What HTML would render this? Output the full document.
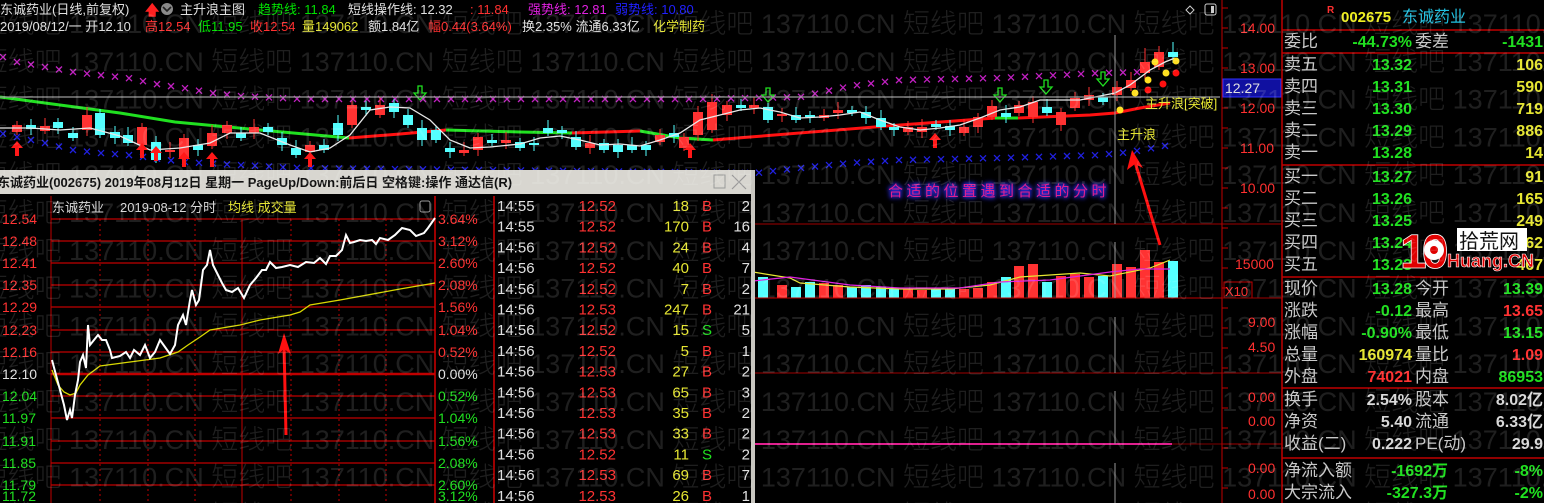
<!DOCTYPE html>
<html><head><meta charset="utf-8"><style>
html,body{margin:0;padding:0;background:#000;width:1544px;height:503px;overflow:hidden}
svg{display:block}
text{font-family:"Liberation Sans","Noto Sans CJK SC",sans-serif}
</style></head><body>
<svg id="s" width="1544" height="503" viewBox="0 0 1544 503" xmlns="http://www.w3.org/2000/svg">
<rect width="1544" height="503" fill="#000"/>
<g id="main"></g>
<line x1="0" y1="97" x2="1220" y2="97" stroke="#9a9a9a" stroke-width="1.2"/>
<line x1="752" y1="224" x2="1222" y2="224" stroke="#a00000"/>
<line x1="752" y1="298" x2="1222" y2="298" stroke="#c00000"/>
<line x1="752" y1="373" x2="1222" y2="373" stroke="#a00000"/>
<line x1="752" y1="444" x2="1172" y2="444" stroke="#e0208f" stroke-width="2"/>
<line x1="1172" y1="444" x2="1222" y2="444" stroke="#800000"/>
<line x1="1115" y1="35" x2="1115" y2="224" stroke="#999"/>
<line x1="1115" y1="242" x2="1115" y2="298" stroke="#999"/>
<line x1="1115" y1="317" x2="1115" y2="373" stroke="#999"/>
<line x1="1115" y1="391" x2="1115" y2="444" stroke="#999"/>
<line x1="1115" y1="463" x2="1115" y2="503" stroke="#999"/>
<g font-size="13">
<text x="0" y="14" fill="#e0e0e0">东诚药业(日线,前复权)</text>
<text x="145" y="15" fill="#ff2020" font-size="14" font-weight="bold">🡅</text>
<circle cx="167" cy="9" r="6" fill="#8a8a8a"/><path d="M163,7 L167,11 L171,7" stroke="#222" stroke-width="1.6" fill="none"/>
<text x="180" y="14" fill="#e0e0e0">主升浪主图</text>
<text x="258" y="14" fill="#00e000">趋势线: 11.84</text>
<text x="348" y="14" fill="#e0e0e0">短线操作线: 12.32</text>
<text x="470" y="14" fill="#ff3030">: 11.84</text>
<text x="528" y="14" fill="#e020e0">强势线: 12.81</text>
<text x="615" y="14" fill="#2020ff">弱势线: 10.80</text>
<text x="0" y="31" fill="#e0e0e0">2019/08/12/一 开12.10</text>
<text x="145" y="31" fill="#ff3030">高12.54</text>
<text x="198" y="31" fill="#00e000">低11.95</text>
<text x="250" y="31" fill="#ff3030">收12.54</text>
<text x="302" y="31" fill="#e6e632">量149062</text>
<text x="368" y="31" fill="#e0e0e0">额1.84亿</text>
<text x="428" y="31" fill="#ff3030">幅0.44(3.64%)</text>
<text x="522" y="31" fill="#e0e0e0">换2.35% 流通6.33亿</text>
<text x="653" y="31" fill="#e6e632">化学制药</text>
</g>
<path d="M1190,6 l4,4 l-4,4 l-4,-4z" stroke="#ccc" fill="none"/>
<rect x="1205" y="4" width="11" height="11" rx="2" stroke="#ccc" fill="none"/><rect x="1211" y="6" width="3" height="7" fill="#ccc"/>
<text x="1145" y="108" fill="#e6e632" font-size="13">主升浪[突破]</text>
<text x="1117" y="139" fill="#e6e632" font-size="13">主升浪</text>
<text x="888" y="196" fill="#e0208f" font-size="15" letter-spacing="3.5" style="filter:drop-shadow(0 0 2px #3030ff) drop-shadow(0 0 2px #3030ff)">合适的位置遇到合适的分时</text>
<path d="M1160,245 L1135,162" stroke="#ff1010" stroke-width="3"/>
<path d="M1132,150 L1127,170 L1135,164 L1143,168Z" fill="#ff1010"/>
<line x1="1222" y1="0" x2="1222" y2="503" stroke="#c00000"/>
<g id="ticks"></g>
<g font-size="14" fill="#ff3030">
<text x="1240" y="33">14.00</text><text x="1240" y="73">13.00</text><text x="1240" y="113">12.00</text><text x="1240" y="153">11.00</text><text x="1240" y="193">10.00</text>
<text x="1235" y="269">15000</text><text x="1248" y="327">9.00</text><text x="1248" y="352">4.50</text>
<text x="1248" y="402">0.00</text><text x="1248" y="426">0.00</text><text x="1248" y="473">0.00</text><text x="1248" y="499">0.00</text>
</g>
<rect x="1223" y="79" width="58" height="18" fill="#1010a0" stroke="#3030ff"/>
<text x="1225" y="93" fill="#e0e0e0" font-size="14">12.27</text>
<rect x="1224" y="282" width="28" height="16" fill="none" stroke="#c00000"/>
<text x="1225" y="296" fill="#ff3030" font-size="13">X10</text>
<line x1="1222" y1="224" x2="1282" y2="224" stroke="#a00000"/>
<line x1="1222" y1="298" x2="1282" y2="298" stroke="#a00000"/>
<line x1="1222" y1="373" x2="1282" y2="373" stroke="#a00000"/>
<line x1="1222" y1="444" x2="1282" y2="444" stroke="#a00000"/>
<line x1="1282" y1="0" x2="1282" y2="503" stroke="#c00000" stroke-width="1.5"/>
<g stroke="#c00000" stroke-width="1.5"><line x1="1282" y1="30" x2="1544" y2="30"/><line x1="1282" y1="53" x2="1544" y2="53"/><line x1="1282" y1="165" x2="1544" y2="165"/><line x1="1282" y1="277" x2="1544" y2="277"/><line x1="1282" y1="388" x2="1544" y2="388"/><line x1="1282" y1="458" x2="1544" y2="458"/></g>
<text x="1327" y="13" fill="#ff3030" font-size="10" font-weight="bold">R</text>
<text x="1341" y="22" fill="#f0f020" font-size="15" font-weight="bold">002675</text>
<text x="1402" y="22" fill="#20c0e0" font-size="16">东诚药业</text>
<g id="rp" font-size="16"></g>
<rect x="1457" y="228" width="70" height="23" fill="#fff"/>
<text x="1459" y="248" fill="#111" font-size="20">拾荒网</text>
<text x="1400" y="268" fill="#e00000" font-size="48" font-weight="bold" letter-spacing="-5" stroke="#fff" stroke-width="0.8">10</text>
<circle cx="1434" cy="250" r="10" fill="#fff"/><circle cx="1434" cy="250" r="4" fill="#e00000"/>
<text x="1447" y="267" fill="#e00000" font-size="18" stroke="#fff" stroke-width="0.6" font-weight="bold">Huang.CN</text>
<rect x="0" y="170" width="753" height="333" fill="#000"/>
<rect x="0" y="170" width="753" height="24" fill="#d8d6d0"/>
<rect x="751" y="170" width="4" height="333" fill="#c8c6c0"/>
<text x="-3" y="187" fill="#111" font-size="13" font-weight="bold">东诚药业(002675) 2019年08月12日 星期一 PageUp/Down:前后日 空格键:操作 通达信(R)</text>
<rect x="714" y="175" width="11" height="13" fill="none" stroke="#999"/>
<path d="M732,175 L746,189 M746,175 L732,189" stroke="#999" stroke-width="1.2"/>
<g id="pop"></g>
<g id="wm" fill="#fff" fill-opacity="0.12" font-size="27" style="font-family:'Noto Sans CJK SC','Liberation Sans',sans-serif;font-weight:300"></g>
</svg>
<script>
var NS="http://www.w3.org/2000/svg";
function el(p,t,a,txt){var e=document.createElementNS(NS,t);for(var k in a)e.setAttribute(k,a[k]);if(txt!=null)e.textContent=txt;p.appendChild(e);return e;}
var M=document.getElementById('main');
function pl(pts,col,w){el(M,'polyline',{points:pts.map(function(p){return p.join(',')}).join(' '),fill:'none',stroke:col,'stroke-width':w});}
function interp(pts,x){for(var i=0;i<pts.length-1;i++){if(x>=pts[i][0]&&x<=pts[i+1][0]){var t=(x-pts[i][0])/(pts[i+1][0]-pts[i][0]);return pts[i][1]+t*(pts[i+1][1]-pts[i][1]);}}return pts[pts.length-1][1];}
var mag=[[0,56],[17,62],[45,67],[73,72],[100,75],[128,78],[156,84],[184,88],[212,93],[240,96],[300,99],[700,99],[800,97],[850,86],[900,80],[1000,78],[1100,73],[1145,72]];
var blu=[[0,133],[17,137],[45,143],[73,150],[100,153],[128,155],[184,162],[240,165],[300,168],[756,173],[800,168],[850,163],[900,160],[1000,158],[1100,155],[1130,152],[1170,145]];
function cross(x,y,c){el(M,'path',{d:'M'+(x-3)+','+(y-3)+'l6,6m0,-6l-6,6',stroke:c,'stroke-width':1.3});}
for(var x=3;x<=1150;x+=14){cross(x,interp(mag,x),'#c020c0');}
for(var x=3;x<=1175;x+=14){cross(x,interp(blu,x),'#2020e0');}
pl([[0,97],[60,105],[120,113],[175,122],[260,130],[349,138]],'#20e020',3);
pl([[349,138],[400,134],[446,130]],'#ff1010',3);
pl([[446,130],[520,132],[572,133]],'#20e020',3);
pl([[572,133],[640,131]],'#ff1010',3);
pl([[640,131],[680,138],[713,140]],'#20e020',3);
pl([[713,140],[750,137],[900,125],[995,118]],'#ff1010',3);
pl([[995,118],[1018,118]],'#20e020',3);
pl([[1018,118],[1090,115],[1115,113],[1140,108],[1170,103]],'#ff1010',3);
var C=[[17,125,132,'r'],[31,125,129,'c'],[45,126,131,'r'],[58,122,128,'c'],[73,133,138,'c'],[87,115,130,'r'],[100,113,135,'c'],[115,132,138,'c'],[128,135,143,'c'],[142,127,145,'r'],[156,142,160,'c'],[170,150,152,'r'],[184,138,158,'r'],[198,145,150,'c'],[212,133,146,'r'],[227,125,133,'r'],[241,133,138,'c'],[254,127,133,'r'],[268,127,132,'c'],[282,138,145,'c'],[296,148,155,'c'],[310,145,152,'r'],[324,145,150,'c'],[338,123,135,'c'],[352,105,125,'r'],[366,107,110,'c'],[380,105,115,'r'],[394,103,112,'c'],[408,115,125,'c'],[422,128,140,'c'],[436,130,140,'c'],[450,148,152,'c'],[464,150,153,'r'],[478,137,150,'r'],[492,140,143,'c'],[506,140,143,'r'],[520,142,148,'c'],[534,143,145,'c'],[548,128,133,'c'],[562,130,133,'c'],[576,137,147,'c'],[590,143,148,'r'],[604,143,150,'c'],[618,145,152,'c'],[632,145,150,'c'],[646,145,150,'c'],[660,135,142,'r'],[674,133,137,'c'],[684,137,148,'r'],[698,112,135,'r'],[712,102,130,'r'],[727,105,115,'r'],[741,105,108,'c'],[754,105,108,'r'],
[768,107,120,'c'],[782,114,116,'r'],[796,115,120,'c'],[810,115,117,'c'],[824,115,118,'r'],[838,110,113,'r'],[852,110,113,'c'],[866,112,118,'c'],[881,118,127,'c'],[894,127,130,'c'],[908,127,132,'r'],[922,127,132,'r'],[936,124,127,'c'],[950,126,130,'c'],[964,127,133,'r'],[978,117,127,'r'],[992,106,117,'r'],[1006,113,117,'c'],[1019,105,113,'r'],[1033,102,117,'r'],[1047,107,113,'c'],[1061,112,125,'r'],[1075,98,108,'r'],[1089,95,100,'r'],[1103,97,102,'c'],[1117,87,95,'r'],[1131,80,88,'r'],[1145,62,73,'r'],[1159,52,67,'r'],[1173,52,57,'c']];
C.forEach(function(c,i){var col=c[3]=='r'?'#ff3232':'#54ffff';var wt=c[1]-4-(i%3)*2,wb=c[2]+3+(i%2)*3;if(i==C.length-1)wt=42;if(i==C.length-3)wt=48;
el(M,'line',{x1:c[0],y1:wt,x2:c[0],y2:wb,stroke:col});
var h=Math.max(c[2]-c[1],1.5);el(M,'rect',{x:c[0]-5,y:c[1],width:10,height:h,fill:col});});
pl([[0,128],[30,128],[60,130],[90,128],[120,136],[150,150],[180,148],[210,143],[230,133],[260,133],[290,145],[310,152],[330,148],[350,135],[370,110],[390,107],[410,108],[430,120],[450,140],[470,148],[490,147],[520,144],[540,138],[560,136],[580,140],[600,145],[620,144],[640,146],[660,140],[680,133],[700,120],[720,115],[740,110],[760,108],[780,112],[800,118],[820,117],[840,115],[860,112],[880,120],[900,127],[920,130],[940,128],[960,125],[980,118],[1000,110],[1020,107],[1040,100],[1060,100],[1080,100],[1100,96],[1115,93],[1130,85],[1150,70],[1165,62],[1175,58]],'#e8e8e8',1.3);
function upA(x,y){el(M,'path',{d:'M'+x+','+y+' l-6,7 h4 v8 h4 v-8 h4z',fill:'#ff1818'});}
[[17,141],[142,143],[156,146],[184,152],[212,152],[310,152],[690,143],[935,133]].forEach(function(a){upA(a[0],a[1]);});
function dnA(x,y){el(M,'path',{d:'M'+(x-2)+','+y+' h4 v7 h4 l-6,7 l-6,-7 h4z',fill:'none',stroke:'#20e020','stroke-width':1.3});}
[[420,86],[768,88],[1000,88],[1046,80],[1103,72]].forEach(function(a){dnA(a[0],a[1]);});
[[1155,62],[1176,61],[1148,80],[1166,73],[1135,93],[1120,110]].forEach(function(d){el(M,'circle',{cx:d[0],cy:d[1],r:3.5,fill:'#ffe020'});});
[[1148,90],[1163,84],[1176,73]].forEach(function(d){el(M,'circle',{cx:d[0],cy:d[1],r:3.5,fill:'#ff1010'});});
var V=[[763,277,'c'],[782,285,'r'],[796,287,'c'],[810,282,'c'],[824,283,'r'],[838,285,'r'],[852,287,'c'],[866,285,'c'],[881,287,'c'],[894,288,'c'],[908,288,'r'],[922,290,'r'],[936,288,'c'],[950,289,'c'],[964,289,'r'],[978,288,'r'],[992,282,'r'],[1006,277,'c'],[1019,266,'r'],[1033,264,'r'],[1047,282,'c'],[1061,276,'r'],[1075,274,'r'],[1089,277,'r'],[1103,276,'c'],[1117,264,'r'],[1131,267,'r'],[1145,250,'r'],[1159,262,'r'],[1173,261,'c']];
V.forEach(function(v){el(M,'rect',{x:v[0]-5,y:v[1],width:10,height:298-v[1],fill:v[2]=='r'?'#ff3232':'#54ffff'});});
pl([[753,272],[790,278],[800,283],[850,287],[900,289],[950,289],[990,285],[1020,277],[1050,275],[1080,273],[1110,276],[1150,268],[1170,260]],'#e6e632',1.2);
pl([[753,281],[790,277],[850,285],[900,288],[960,288],[1000,282],[1050,280],[1080,276],[1110,272],[1140,269],[1170,269]],'#e020e0',1.2);
var T=document.getElementById('ticks');
for(var y=8;y<503;y+=20){el(T,'line',{x1:1222,y1:y,x2:1228,y2:y,stroke:'#c00000'});}
var R=document.getElementById('rp');
var G='#20e020',Y='#e6e632',W='#d8d8d8',RD='#ff3232',L='#c8c8c8';
var rows=[[47,'委比','-44.73%',G,'委差','-1431',G],[70,'卖五','13.32',G,'','106',Y],[92,'卖四','13.31',G,'','590',Y],[114,'卖三','13.30',G,'','719',Y],[136,'卖二','13.29',G,'','886',Y],[158,'卖一','13.28',G,'','14',Y],
[182,'买一','13.27',G,'','91',Y],[204,'买二','13.26',G,'','165',Y],[226,'买三','13.25',G,'','249',Y],[248,'买四','13.24',G,'','562',Y],[270,'买五','13.23',G,'','467',Y],
[294,'现价','13.28',G,'今开','13.39',G],[316,'涨跌','-0.12',G,'最高','13.65',RD],[338,'涨幅','-0.90%',G,'最低','13.15',G],[360,'总量','160974',Y,'量比','1.09',RD],[382,'外盘','74021',RD,'内盘','86953',G],
[405,'换手','2.54%',W,'股本','8.02亿',W],[427,'净资','5.40',W,'流通','6.33亿',W],[449,'收益(二)','0.222',W,'PE(动)','29.9',W],[476,'净流入额','-1692万',G,'','-8%',G],[498,'大宗流入','-327.3万',G,'','-2%',G]];
rows.forEach(function(r){el(R,'text',{x:1284,y:r[0],fill:L,'font-size':17},r[1]);
var vx=r[0]>460?1448:1412;el(R,'text',{x:vx,y:r[0],fill:r[3],'text-anchor':'end','font-weight':'bold'},r[2]);
if(r[4])el(R,'text',{x:1415,y:r[0],fill:L,'font-size':17},r[4]);
el(R,'text',{x:1543,y:r[0],fill:r[6],'text-anchor':'end','font-weight':'bold'},r[5]);});
var P=document.getElementById('pop');
el(P,'text',{x:52,y:212,fill:'#d8d8d8','font-size':13},'东诚药业');
el(P,'text',{x:120,y:212,fill:'#d8d8d8','font-size':13},'2019-08-12 分时');
el(P,'text',{x:228,y:212,fill:'#e6e632','font-size':13},'均线 成交量');
el(P,'rect',{x:420,y:201,width:10,height:11,fill:'none',stroke:'#999',rx:2});
var gy=[219,241,263,285,307,330,352,374,396,418,441,463,485];
var lp=['12.54','12.48','12.41','12.35','12.29','12.23','12.16','12.10','12.04','11.97','11.91','11.85','11.79'];
var rp=['3.64%','3.12%','2.60%','2.08%','1.56%','1.04%','0.52%','0.00%','0.52%','1.04%','1.56%','2.08%','2.60%'];
gy.forEach(function(y,i){el(P,'line',{x1:51,y1:y,x2:435,y2:y,stroke:'#c00000','stroke-width':i==7?2.5:1.3});
var c=i<7?'#ff3232':(i==7?'#e0e0e0':'#20e020');
el(P,'text',{x:2,y:y+5,fill:c,'font-size':14},lp[i]);el(P,'text',{x:438,y:y+5,fill:c,'font-size':14},rp[i]);});
el(P,'text',{x:2,y:501,fill:'#20e020','font-size':14},'11.72');el(P,'text',{x:438,y:501,fill:'#20e020','font-size':14},'3.12%');
el(P,'line',{x1:51,y1:196,x2:51,y2:503,stroke:'#c00000'});
[100,148,195,291,339,386].forEach(function(x){el(P,'line',{x1:x,y1:219,x2:x,y2:503,stroke:'#c00000','stroke-dasharray':'2,3'});});
el(P,'line',{x1:242,y1:219,x2:242,y2:503,stroke:'#c00000'});
el(P,'line',{x1:435,y1:196,x2:435,y2:503,stroke:'#d00000','stroke-width':1.5});
el(P,'line',{x1:494,y1:196,x2:494,y2:503,stroke:'#d00000','stroke-width':1.5});
function ppl(pts,c,w){el(P,'polyline',{points:pts.map(function(p){return p.join(',')}).join(' '),fill:'none',stroke:c,'stroke-width':w});}
ppl([[52,370],[58,385],[64,392],[70,395],[76,393],[80,385],[88,375],[100,366],[130,362],[160,358],[178,352],[188,345],[200,337],[210,330],[240,325],[260,320],[290,315],[300,312],[310,305],[340,300],[400,289],[435,283]],'#d8d800',1.3);
ppl([[52,360],[56,375],[60,390],[64,405],[67,420],[70,410],[72,418],[75,395],[78,380],[80,362],[83,355],[86,368],[88,325],[90,345],[94,340],[98,335],[102,340],[106,340],[110,350],[112,358],[120,356],[126,352],[130,358],[134,350],[140,355],[145,345],[150,358],[155,352],[160,340],[165,347],[170,354],[175,345],[178,325],[183,315],[186,325],[190,300],[192,290],[196,305],[199,300],[203,270],[207,265],[210,250],[213,265],[218,275],[222,283],[226,290],[232,292],[238,288],[244,298],[250,285],[256,278],[262,270],[266,270],[270,262],[276,268],[282,267],[290,265],[298,267],[306,262],[314,263],[320,258],[326,264],[330,256],[336,256],[342,250],[346,235],[350,243],[354,242],[360,240],[366,241],[372,240],[376,244],[380,238],[388,240],[395,235],[402,228],[410,230],[416,236],[424,233],[428,228],[435,218]],'#ffffff',2);
el(P,'path',{d:'M286,435 L284,345',stroke:'#ff1010','stroke-width':3});
el(P,'path',{d:'M284,333 L278,354 L284,349 L291,354Z',fill:'#ff1010'});
var tk=[['14:55','12.52','18','B','2'],['14:55','12.52','170','B','16'],['14:56','12.52','24','B','4'],['14:56','12.52','40','B','7'],['14:56','12.52','7','B','2'],['14:56','12.53','247','B','21'],['14:56','12.52','15','S','5'],['14:56','12.52','5','B','1'],['14:56','12.53','27','B','2'],['14:56','12.53','65','B','3'],['14:56','12.53','35','B','2'],['14:56','12.53','33','B','2'],['14:56','12.52','11','S','2'],['14:56','12.53','69','B','7'],['14:56','12.53','26','B','1']];
tk.forEach(function(t,i){var y=211+i*20.7;
el(P,'text',{x:497,y:y,fill:'#e0e0e0','font-size':15},t[0]);
el(P,'text',{x:616,y:y,fill:'#ff3232','font-size':15,'text-anchor':'end'},t[1]);
el(P,'text',{x:689,y:y,fill:'#e6e632','font-size':15,'text-anchor':'end'},t[2]);
el(P,'text',{x:702,y:y,fill:t[3]=='S'?'#20e020':'#ff3232','font-size':15},t[3]);
el(P,'text',{x:750,y:y,fill:'#e0e0e0','font-size':15,'text-anchor':'end'},t[4]);});
var WM=document.getElementById('wm');
for(var r=0;r<14;r++){var y=33+r*37.8;var s='';for(var k=0;k<8;k++)s+='短线吧 137110.CN ';el(WM,'text',{x:-250,y:y,'xml:space':'preserve'},s);}
</script>
</body></html>
